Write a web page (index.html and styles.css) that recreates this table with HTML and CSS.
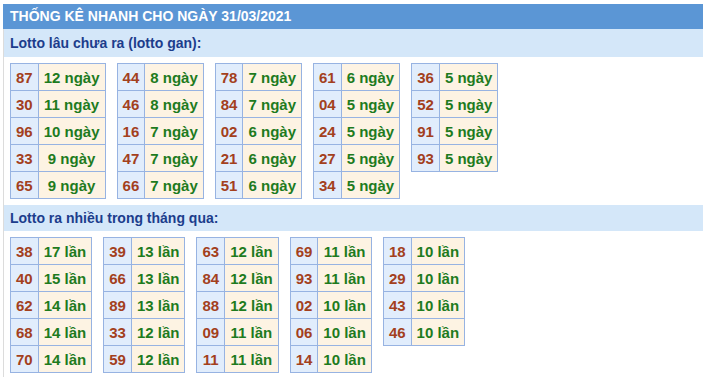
FILE: index.html
```html
<!DOCTYPE html>
<html lang="vi">
<head>
<meta charset="utf-8">
<title>Thống kê nhanh</title>
<link rel="stylesheet" href="styles.css">
</head>
<body>
<div class="box">
  <div class="title">THỐNG KÊ NHANH CHO NGÀY 31/03/2021</div>
  <div class="body">
    <div class="sub">Lotto lâu chưa ra (lotto gan):</div>
    <div class="tables">
      <table><tr><td class="n">87</td><td class="v">12 ngày</td></tr><tr><td class="n">30</td><td class="v">11 ngày</td></tr><tr><td class="n">96</td><td class="v">10 ngày</td></tr><tr><td class="n">33</td><td class="v">9 ngày</td></tr><tr><td class="n">65</td><td class="v">9 ngày</td></tr></table>
      <table><tr><td class="n">44</td><td class="v">8 ngày</td></tr><tr><td class="n">46</td><td class="v">8 ngày</td></tr><tr><td class="n">16</td><td class="v">7 ngày</td></tr><tr><td class="n">47</td><td class="v">7 ngày</td></tr><tr><td class="n">66</td><td class="v">7 ngày</td></tr></table>
      <table><tr><td class="n">78</td><td class="v">7 ngày</td></tr><tr><td class="n">84</td><td class="v">7 ngày</td></tr><tr><td class="n">02</td><td class="v">6 ngày</td></tr><tr><td class="n">21</td><td class="v">6 ngày</td></tr><tr><td class="n">51</td><td class="v">6 ngày</td></tr></table>
      <table><tr><td class="n">61</td><td class="v">6 ngày</td></tr><tr><td class="n">04</td><td class="v">5 ngày</td></tr><tr><td class="n">24</td><td class="v">5 ngày</td></tr><tr><td class="n">27</td><td class="v">5 ngày</td></tr><tr><td class="n">34</td><td class="v">5 ngày</td></tr></table>
      <table><tr><td class="n">36</td><td class="v">5 ngày</td></tr><tr><td class="n">52</td><td class="v">5 ngày</td></tr><tr><td class="n">91</td><td class="v">5 ngày</td></tr><tr><td class="n">93</td><td class="v">5 ngày</td></tr></table>
    </div>
    <div class="sub sub2">Lotto ra nhiều trong tháng qua:</div>
    <div class="tables">
      <table><tr><td class="n">38</td><td class="v">17 lần</td></tr><tr><td class="n">40</td><td class="v">15 lần</td></tr><tr><td class="n">62</td><td class="v">14 lần</td></tr><tr><td class="n">68</td><td class="v">14 lần</td></tr><tr><td class="n">70</td><td class="v">14 lần</td></tr></table>
      <table><tr><td class="n">39</td><td class="v">13 lần</td></tr><tr><td class="n">66</td><td class="v">13 lần</td></tr><tr><td class="n">89</td><td class="v">13 lần</td></tr><tr><td class="n">33</td><td class="v">12 lần</td></tr><tr><td class="n">59</td><td class="v">12 lần</td></tr></table>
      <table><tr><td class="n">63</td><td class="v">12 lần</td></tr><tr><td class="n">84</td><td class="v">12 lần</td></tr><tr><td class="n">88</td><td class="v">12 lần</td></tr><tr><td class="n">09</td><td class="v">11 lần</td></tr><tr><td class="n">11</td><td class="v">11 lần</td></tr></table>
      <table><tr><td class="n">69</td><td class="v">11 lần</td></tr><tr><td class="n">93</td><td class="v">11 lần</td></tr><tr><td class="n">02</td><td class="v">10 lần</td></tr><tr><td class="n">06</td><td class="v">10 lần</td></tr><tr><td class="n">14</td><td class="v">10 lần</td></tr></table>
      <table><tr><td class="n">18</td><td class="v">10 lần</td></tr><tr><td class="n">29</td><td class="v">10 lần</td></tr><tr><td class="n">43</td><td class="v">10 lần</td></tr><tr><td class="n">46</td><td class="v">10 lần</td></tr></table>
    </div>
  </div>
</div>
</body>
</html>
```

FILE: styles.css
```css
html, body {
  margin: 0;
  padding: 0;
  background: #ffffff;
}
body {
  font-family: "Liberation Sans", Arial, sans-serif;
  font-weight: bold;
}
.box {
  margin: 4px 0 0 3px;
  width: 700px;
}
.title {
  height: 25px;
  line-height: 25px;
  background: #5b96d5;
  color: #ffffff;
  font-size: 14px;
  padding-left: 7px;
  box-sizing: border-box;
}
.body {
  border-left: 1px solid #dcdcdc;
  padding-bottom: 4px;
}
.sub {
  height: 28px;
  line-height: 28px;
  background: #d4e7f9;
  color: #1c3d8c;
  font-size: 14px;
  padding-left: 6px;
}
.sub2 {
  height: 26px;
  line-height: 26px;
  margin-top: 6px;
}
.tables {
  display: flex;
  align-items: flex-start;
  gap: 11px;
  padding: 6px 0 0 6px;
}
table {
  border-collapse: collapse;
  font-size: 15px;
}
td {
  border: 1px solid #97b3e2;
  height: 26px;
  padding: 0 5px;
  text-align: center;
}
td.n {
  background: #e1edfc;
  color: #a3401d;
}
td.v {
  background: #fdf3e3;
  color: #1e7b1e;
}
```
